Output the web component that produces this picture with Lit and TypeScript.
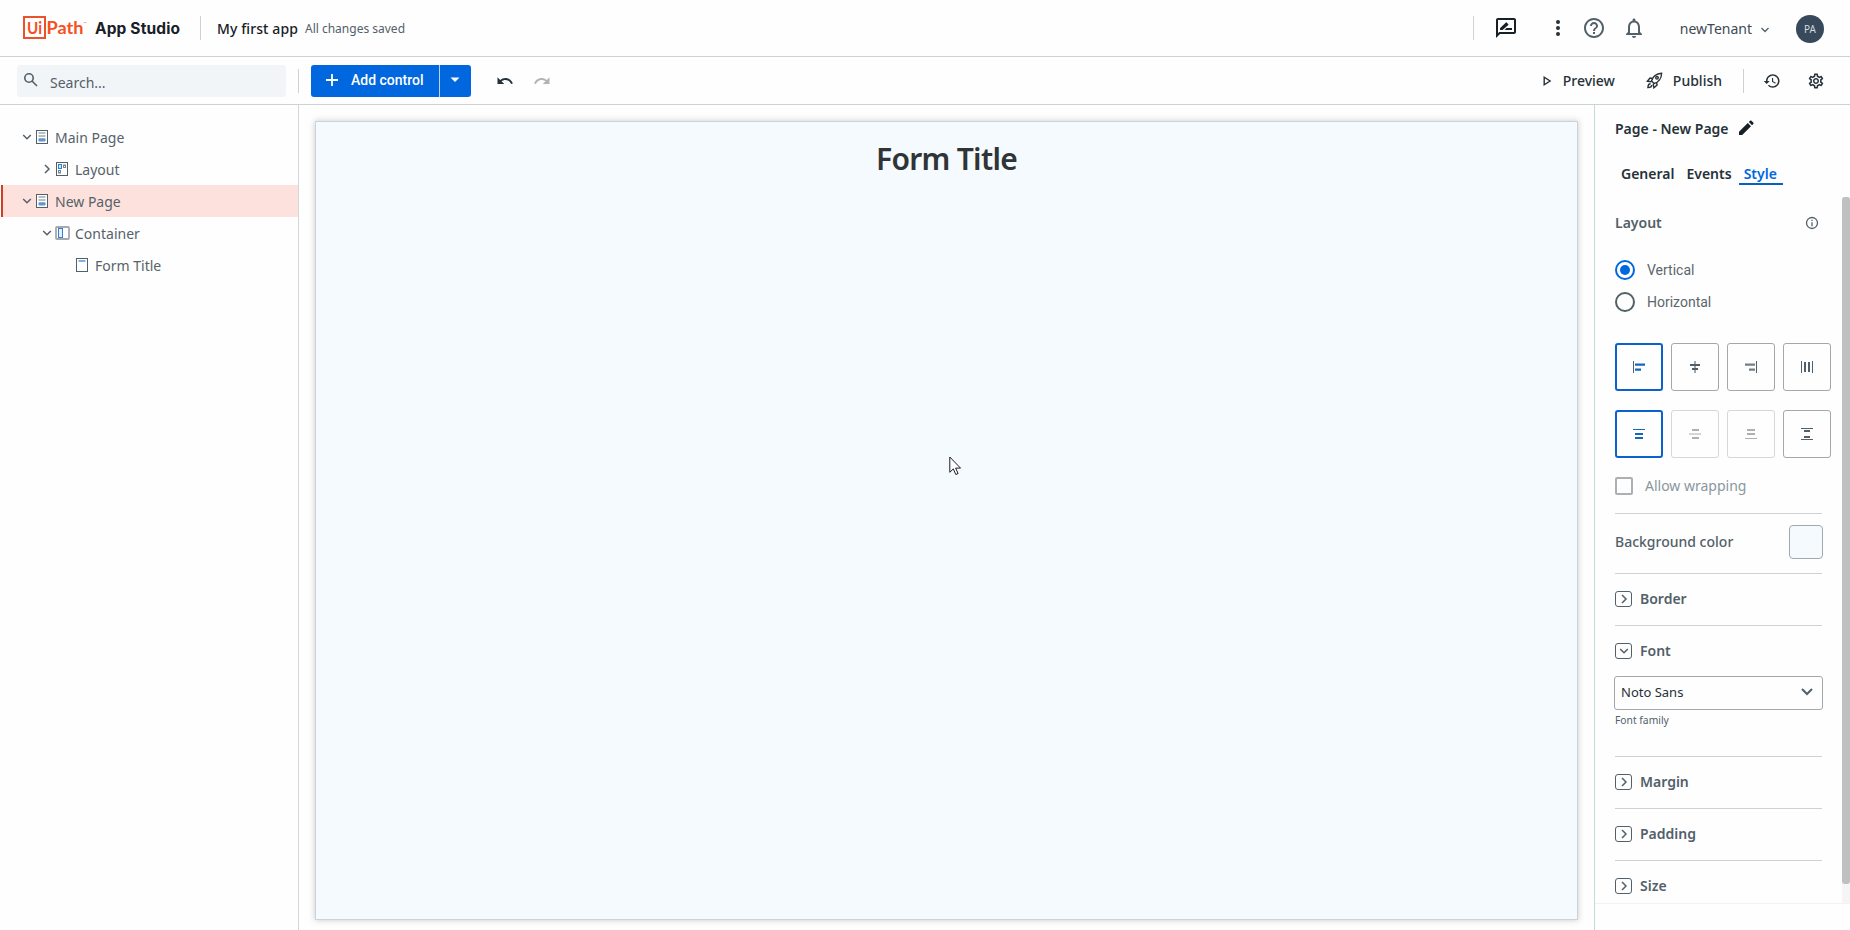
import { html, svg, css, LitElement } from "lit";
import { customElement, property } from "lit/decorators.js";
import { classMap } from "lit/directives/class-map.js";

const chevronRight = html`<svg width="14" height="14" viewBox="0 0 14 14" fill="none" stroke="currentColor" stroke-width="1.5"><path d="M5 3l4 4-4 4" /></svg>`;
const chevronDown = html`<svg width="14" height="14" viewBox="0 0 14 14" fill="none" stroke="currentColor" stroke-width="1.5"><path d="M3.200 5L7 8.800 10.800 5" /></svg>`;

const treeIcons: Record<string, unknown> = {
  page: svg`<rect x="0.500" y="1.500" width="11" height="13" fill="#fff" stroke="#526069" /><path d="M2.500 4h7M2.500 7h7" stroke="#a4a9ad" stroke-width="1.600" /><rect x="2.500" y="9.200" width="7" height="3.200" rx="1" fill="#6394cf" />`,
  layout: svg`<rect x="0.500" y="1.500" width="11" height="13" fill="#fff" stroke="#526069" /><rect x="2.500" y="3.500" width="3" height="4" fill="#cfe4fa" stroke="#2f7fd6" /><rect x="7.500" y="4" width="2" height="2.500" fill="none" stroke="#7a8389" /><rect x="2.500" y="9.500" width="2" height="2.500" fill="none" stroke="#7a8389" />`,
  container: svg`<rect x="0" y="2" width="13" height="12" rx="1" fill="#fff" stroke="#a4a9ad" stroke-width="1.800" /><rect x="2.500" y="3.500" width="4" height="9" fill="#e3effb" stroke="#3a7fcc" />`,
  form: svg`<rect x="0.500" y="1.500" width="11" height="13" fill="#fff" stroke="#526069" /><path d="M2.500 4h7" stroke="#7fb0ea" stroke-width="2" />`,
};

@customElement("tree-row")
export class TreeRow extends LitElement {
  @property({ type: String })
  label = "";
  @property({ type: String })
  icon = "page";
  @property({ type: Number })
  level = 0;
  @property({ type: String })
  state = "";
  @property({ type: Boolean })
  selected = false;
  static styles = css`
    :host {
      display: block;
    }
    .row {
      display: flex;
      align-items: center;
      height: 32px;
      margin-left: 1px;
      padding-left: 17px;
      border-left: 2px solid transparent;
      font-size: 14px;
      color: #56626a;
    }
    .row.selected {
      background: #fde1dc;
      border-left-color: #cf3f20;
    }
    .row.l1 {
      padding-left: 37px;
    }
    .row.l2 {
      padding-left: 57px;
    }
    .toggle {
      display: flex;
      width: 16px;
    }
    .icon {
      overflow: visible;
    }
    .label {
      margin-left: 5px;
    }
  `;
  render() {
    return html`
      <div class=${classMap({ row: true, selected: this.selected, l1: this.level === 1, l2: this.level === 2 })}>
        <span class="toggle">
          ${this.state === "open" ? chevronDown : this.state === "closed" ? chevronRight : ""}
        </span>
        <svg class="icon" width="14" height="16" viewBox="0 0 14 16">${treeIcons[this.icon]}</svg>
        <span class="label">${this.label}</span>
      </div>
    `;
  }
}

@customElement("style-section")
export class StyleSection extends LitElement {
  @property({ type: String })
  label = "";
  @property({ type: Boolean })
  open = false;
  static styles = css`
    :host {
      display: block;
      border-top: 1px solid #cfd2d4;
    }
    .head {
      display: flex;
      align-items: center;
      gap: 8px;
      height: 49px;
      padding-bottom: 2px;
      font-size: 14px;
      font-weight: 600;
      color: #526069;
    }
    .box {
      display: flex;
      align-items: center;
      justify-content: center;
      box-sizing: border-box;
      width: 17px;
      height: 16px;
      border: 1px solid #526069;
      border-radius: 3px;
    }
    .head svg {
      flex: none;
    }
  `;
  render() {
    return html`
      <div class="head">
        <span class="box">${this.open ? chevronDown : chevronRight}</span>
        ${this.label}
      </div>
      <slot></slot>
    `;
  }
}

// glyphs are drawn on a 16px grid; "main" takes the accent colour when active
const alignRow = [
  { state: "active", icon: svg`<path d="M2.500 2v12" stroke="#526069" /><path class="main" d="M4 5.600h10M4 10.600h6" stroke-width="2.400" />` },
  { state: "", icon: svg`<path d="M8 2v12" stroke="#8a9297" stroke-width="1.600" /><path class="main" d="M3 6h10M5 10h6" stroke-width="2" />` },
  { state: "", icon: svg`<path class="main" d="M13.500 2v12" /><path d="M2 5.600h10M6 10.600h6" stroke="#777e83" stroke-width="2.400" />` },
  { state: "", icon: svg`<path class="main" d="M2.500 2v12M13.500 2v12" /><path class="main" d="M6 3v10M10 3v10" stroke-width="2" />` },
];
const justifyRow = [
  { state: "active", icon: svg`<path class="main" d="M2 3.500h12" /><path class="main" d="M4 8h8M4 12h8" stroke-width="2" />` },
  { state: "disabled", icon: svg`<path d="M2 8h12" stroke="#d3d5d6" stroke-width="2" /><path class="main" d="M5 4h7M5 12h7" stroke-width="2" />` },
  { state: "disabled", icon: svg`<path class="main" d="M2 12.500h12" /><path class="main" d="M4 4h8M4 8h8" stroke-width="2" />` },
  { state: "", icon: svg`<path class="main" d="M2 2.500h12M2 13.500h12" /><path class="main" d="M5 5h6M5 11h6" stroke-width="2" />` },
];

@customElement("app-root")
export class AppRoot extends LitElement {
  static styles = css`
    :host {
      display: flex;
      flex-direction: column;
      position: relative;
      height: 930px;
      overflow: hidden;
      background: #fefefe;
      color: #273139;
      font-family: "Noto Sans", sans-serif;
      font-size: 14px;
    }
    svg {
      display: block;
      flex: none;
    }
    .header,
    .toolbar {
      display: flex;
      align-items: center;
      box-sizing: border-box;
      border-bottom: 1px solid #cfd2d4;
      flex: none;
    }
    .header {
      height: 57px;
      padding: 0 26px 0 23px;
    }
    .toolbar {
      height: 48px;
      padding: 0 25px 0 17px;
    }
    .sep {
      width: 1px;
      height: 24px;
      background: #cfd2d4;
      flex: none;
    }
    .header .logo + .sep {
      margin-left: 19px;
    }
    .grow {
      flex: 1;
    }
    .app-name {
      margin-left: 16px;
      font-weight: 500;
      letter-spacing: 0.1px;
      color: #182027;
    }
    .saved {
      margin-left: 7px;
      font-size: 12px;
      color: #526069;
    }
    .feedback {
      margin-left: 20px;
    }
    .more {
      margin-left: 28px;
    }
    .help {
      margin-left: 12px;
    }
    .bell {
      margin-left: 16px;
    }
    .tenant {
      margin: 0 8px 0 34px;
      color: #3d4a54;
    }
    .tenant-arrow {
      margin-top: 4px;
    }
    .avatar {
      display: flex;
      align-items: center;
      justify-content: center;
      width: 28px;
      height: 28px;
      margin: 2px 0 0 26px;
      border-radius: 50%;
      background: #38495b;
      color: #d5dade;
      font-size: 10px;
    }
    .search {
      display: flex;
      align-items: center;
      gap: 12px;
      box-sizing: border-box;
      width: 269px;
      height: 32px;
      padding-left: 6px;
      border-radius: 3px;
      background: #f2f5f7;
      color: #526069;
    }
    .search span {
      padding-top: 4px;
    }
    .search svg {
      margin-top: -3px;
    }
    .search + .sep {
      margin-left: 12px;
    }
    .add {
      display: flex;
      height: 32px;
      margin: 0 25px 0 12px;
      border-radius: 3px;
      background: #0067df;
      color: #fff;
      font: 500 14px Roboto, sans-serif;
    }
    .add-main {
      display: flex;
      align-items: center;
      gap: 12px;
      box-sizing: border-box;
      width: 128px;
      padding: 0 0 1px 14px;
    }
    .add-more {
      display: flex;
      align-items: center;
      justify-content: center;
      box-sizing: border-box;
      width: 32px;
      padding: 0 2px 1px 0;
      border-left: 1px solid #b9d6f7;
    }
    .redo {
      margin-left: 19px;
    }
    .action {
      margin-left: 10px;
      font-weight: 500;
      color: #273139;
    }
    .rocket {
      margin-left: 31px;
    }
    .action + .sep {
      margin-left: 21px;
    }
    .history {
      margin-left: 19px;
    }
    .gear {
      margin-left: 26px;
    }
    .body {
      display: flex;
      flex: 1;
      min-height: 0;
    }
    .tree {
      box-sizing: border-box;
      width: 299px;
      padding-top: 16px;
      border-right: 1px solid #cfd8dd;
    }
    .stage {
      flex: 1;
      padding: 16px 16px 10px;
    }
    .page {
      box-sizing: border-box;
      height: 100%;
      padding-top: 16px;
      border: 1px solid #cdd2d6;
      background: #f5fafe;
      box-shadow: 0 0 6px rgba(40, 40, 60, 0.25);
      text-align: center;
    }
    .page h1 {
      margin: 0;
      font-size: 30px;
      line-height: 41px;
      font-weight: 600;
      letter-spacing: -0.7px;
      color: #2f3437;
    }
    .panel {
      display: flex;
      flex-direction: column;
      box-sizing: border-box;
      width: 256px;
      border-left: 1px solid #c3dbdb;
    }
    .panel-title {
      display: flex;
      align-items: center;
      gap: 9px;
      box-sizing: border-box;
      height: 48px;
      padding: 0 0 2px 20px;
      font-weight: 600;
    }
    .tabs {
      display: flex;
      gap: 2px;
      padding: 6px 0 12px 21px;
      font-weight: 600;
    }
    .tab {
      height: 24px;
      padding: 0 5px;
      border-bottom: 2px solid transparent;
      line-height: 29px;
    }
    .tab.active {
      padding-right: 6px;
      color: #0067df;
      border-color: #0a5fbf;
    }
    .scroller {
      display: flex;
      height: 706px;
      border-bottom: 1px solid #f2f2f3;
    }
    .content {
      flex: 1;
      overflow: hidden;
      padding-left: 20px;
    }
    .track {
      width: 8px;
      background: #f5f5f5;
    }
    .thumb {
      height: 687px;
      border-radius: 3px;
      background: #bfc0c1;
    }
    .fields {
      width: 207px;
    }
    .layout-label {
      display: flex;
      align-items: center;
      justify-content: space-between;
      box-sizing: border-box;
      height: 52px;
      padding: 0 3px 1px 0;
      font-weight: 600;
      color: #526069;
    }
    .radio {
      display: flex;
      align-items: center;
      gap: 12px;
      height: 32px;
      font-family: Roboto, sans-serif;
      color: #5c666d;
    }
    .radio:first-of-type {
      margin-top: 5px;
    }
    .dot {
      box-sizing: border-box;
      width: 20px;
      height: 20px;
      padding: 3px;
      border: 2px solid #526069;
      border-radius: 50%;
    }
    .dot.on {
      border-color: #0067df;
      background: #0067df;
      background-clip: content-box;
    }
    .cells {
      display: flex;
      gap: 8px;
      width: 216px;
    }
    .cells.first {
      margin: 25px 0 19px;
    }
    .cell {
      display: flex;
      align-items: center;
      justify-content: center;
      box-sizing: border-box;
      width: 48px;
      height: 48px;
      border: 1px solid #a4a8ab;
      border-radius: 3px;
    }
    .cell.active {
      border: 2px solid #0b62cd;
    }
    .cell.disabled {
      border-color: #d5d7d8;
    }
    .main {
      stroke: #526069;
    }
    .active .main {
      stroke: #1766bd;
    }
    .disabled .main {
      stroke: #adb0b2;
    }
    .check {
      display: flex;
      align-items: center;
      gap: 12px;
      height: 55px;
      color: #8a979f;
    }
    .check i {
      box-sizing: border-box;
      width: 18px;
      height: 18px;
      border: 2px solid #adb0b2;
      border-radius: 2px;
    }
    .bg-wrap {
      border-top: 1px solid #cfd2d4;
    }
    .bg {
      display: flex;
      align-items: center;
      justify-content: space-between;
      box-sizing: border-box;
      width: 208px;
      height: 59px;
      padding-bottom: 4px;
      font-weight: 500;
      color: #526069;
    }
    .swatch {
      box-sizing: border-box;
      width: 34px;
      height: 34px;
      border: 1px solid #a4a8ab;
      border-radius: 4px;
      background: #f5fafe;
    }
    .select {
      display: flex;
      align-items: center;
      justify-content: space-between;
      box-sizing: border-box;
      width: 209px;
      height: 34px;
      margin: -1px 0 0 -1px;
      padding: 0 9px 2px 6px;
      border: 1px solid #a4a8ab;
      border-radius: 3px;
      font-size: 13px;
    }
    .hint {
      height: 46px;
      padding-top: 2px;
      box-sizing: border-box;
      font-size: 10.300px;
      line-height: 16px;
      color: #526069;
    }
    .cursor {
      position: absolute;
      left: 949px;
      top: 456px;
    }
  `;
  renderCells(cells: typeof alignRow) {
    return cells.map(
      (c) => html`
        <div class="cell ${c.state}">
          <svg width="16" height="16" viewBox="0 0 16 16" fill="none">${c.icon}</svg>
        </div>
      `
    );
  }
  render() {
    return html`
      <div class="header">
        <svg class="logo" width="158" height="26" viewBox="0 0 158 26">
          <rect x="1" y="2" width="21" height="21" fill="none" stroke="#e8532b" stroke-width="2" />
          <g font-family="Lato, sans-serif" fill="#f5501f">
            <text x="4" y="19" font-size="17" font-weight="700" textLength="15" lengthAdjust="spacingAndGlyphs">Ui</text>
            <text x="23.500" y="19" font-size="16.500" font-weight="700" textLength="37" lengthAdjust="spacingAndGlyphs">Path</text>
            <text x="60.500" y="10" font-size="4">™</text>
          </g>
          <text x="72" y="19" font-family="Inter, sans-serif" font-size="15.500" font-weight="700" fill="#182027" textLength="85">App Studio</text>
        </svg>
        <span class="sep"></span>
        <span class="app-name">My first app</span>
        <span class="saved">All changes saved</span>
        <span class="grow"></span>
        <span class="sep"></span>
        <svg class="feedback" width="24" height="24" viewBox="0 0 24 24" fill="#182027">
          <path d="M20 2H4c-1.100 0-2 .9-2 2v18l4-4h14c1.100 0 2-.9 2-2V4c0-1.100-.9-2-2-2zm0 14H5.200L4 17.200V4h16v12z" />
          <path d="M10.500 14H18v-2h-5.500zM14.300 8.900c.2-.2.2-.5 0-.7l-1.700-1.700c-.2-.2-.5-.2-.7 0L6 12.200V14h2.500z" />
        </svg>
        <svg class="more" width="24" height="24" viewBox="0 0 24 24" fill="#273139">
          <circle cx="12" cy="6" r="2" /><circle cx="12" cy="12" r="2" /><circle cx="12" cy="18" r="2" />
        </svg>
        <svg class="help" width="24" height="24" viewBox="0 0 24 24" fill="#526069">
          <path d="M11 18h2v-2h-2v2zm1-16C6.480 2 2 6.480 2 12s4.480 10 10 10 10-4.480 10-10S17.520 2 12 2zm0 18c-4.410 0-8-3.590-8-8s3.590-8 8-8 8 3.590 8 8-3.590 8-8 8zm0-14c-2.210 0-4 1.790-4 4h2c0-1.100.9-2 2-2s2 .9 2 2c0 2-3 1.750-3 5h2c0-2.250 3-2.500 3-5 0-2.210-1.790-4-4-4z" />
        </svg>
        <svg class="bell" width="24" height="24" viewBox="0 0 24 24" fill="#526069">
          <path d="M12 22c1.100 0 2-.9 2-2h-4c0 1.100.9 2 2 2zm6-6v-5c0-3.070-1.630-5.640-4.500-6.320V4c0-.83-.67-1.500-1.500-1.500s-1.500.67-1.500 1.500v.68C7.640 5.360 6 7.920 6 11v5l-2 2v1h16v-1l-2-2zm-2 1H8v-6c0-2.480 1.510-4.500 4-4.500s4 2.020 4 4.500v6z" />
        </svg>
        <span class="tenant">newTenant</span>
        <svg class="tenant-arrow" width="10" height="8" viewBox="0 0 10 8" fill="none" stroke="#526069" stroke-width="1.300"><path d="M1.500 2L5 5.500 8.500 2" /></svg>
        <span class="avatar">PA</span>
      </div>

      <div class="toolbar">
        <div class="search">
          <svg width="15" height="15" viewBox="0 0 15 15" fill="none" stroke="#526069" stroke-width="1.600"><circle cx="6" cy="6" r="4.200" /><path d="M9 9l5 5" /></svg>
          <span>Search...</span>
        </div>
        <span class="sep"></span>
        <div class="add">
          <div class="add-main">
            <svg width="14" height="14" viewBox="0 0 14 14" stroke="#fff" stroke-width="1.800"><path d="M7 1v12M1 7h12" /></svg>
            Add control
          </div>
          <div class="add-more">
            <svg width="10" height="6" viewBox="0 0 10 6" fill="#fff"><path d="M0.500 0.500h9L5 5z" /></svg>
          </div>
        </div>
        <svg width="18" height="18" viewBox="0 0 24 24" fill="#273139"><path d="M12.500 8c-2.650 0-5.050.99-6.900 2.600L2 7v9h9l-3.620-3.620c1.390-1.160 3.160-1.880 5.120-1.880 3.540 0 6.550 2.310 7.600 5.500l2.370-.78C21.080 11.030 17.150 8 12.500 8z" /></svg>
        <svg class="redo" width="18" height="18" viewBox="0 0 24 24" fill="#b1b4b6"><path d="M18.400 10.600C16.550 8.990 14.150 8 11.500 8c-4.650 0-8.580 3.030-9.960 7.220L3.900 16c1.050-3.190 4.050-5.500 7.600-5.500 1.950 0 3.730.72 5.120 1.880L13 16h9V7l-3.600 3.600z" /></svg>
        <span class="grow"></span>
        <svg width="10" height="12" viewBox="0 0 10 12" fill="none" stroke="#273139" stroke-width="1.400"><path d="M1.200 2.200v7.600L7.100 6z" /></svg>
        <span class="action">Preview</span>
        <svg class="rocket" width="17" height="17" viewBox="0 0 17 17" fill="none" stroke="#273139" stroke-width="1.400">
          <path d="M5.500 9C6.600 5 10 1.600 15.600 1.200 15.600 6.800 12 10.400 8 11.500z" />
          <path d="M6.500 6.500L4 6 1.300 9.200l4 .6M10.500 10.500l.6 2.500-3.200 2.800-.7-4M4.600 11.800c-1.500 0-2.600 1.600-2.700 3.800 2.200-.1 3.800-1.200 3.800-2.700" />
          <circle cx="11" cy="5.800" r="1.300" />
        </svg>
        <span class="action">Publish</span>
        <span class="sep"></span>
        <svg class="history" width="18" height="18" viewBox="0 0 24 24" fill="#273139"><path d="M13 3c-4.970 0-9 4.030-9 9H1l3.890 3.890.07.14L9 12H6c0-3.870 3.130-7 7-7s7 3.130 7 7-3.130 7-7 7c-1.930 0-3.680-.79-4.940-2.060l-1.420 1.420C8.270 19.990 10.510 21 13 21c4.970 0 9-4.030 9-9s-4.030-9-9-9zm-1 5v5l4.280 2.540.72-1.210-3.500-2.080V8H12z" /></svg>
        <svg class="gear" width="18" height="18" viewBox="0 0 24 24" fill="#273139"><path d="M19.430 12.980c.04-.32.07-.64.07-.98 0-.34-.03-.66-.07-.98l2.110-1.650c.19-.15.24-.42.12-.64l-2-3.460c-.09-.16-.26-.25-.44-.25-.06 0-.12.01-.17.03l-2.490 1c-.52-.4-1.080-.73-1.690-.98l-.38-2.650C14.460 2.180 14.250 2 14 2h-4c-.25 0-.46.18-.49.42l-.38 2.650c-.61.25-1.170.59-1.690.98l-2.490-1c-.06-.02-.12-.03-.18-.03-.17 0-.34.09-.43.25l-2 3.460c-.13.22-.07.49.12.64l2.110 1.650c-.04.32-.07.65-.07.98 0 .33.03.66.07.98l-2.110 1.650c-.19.15-.24.42-.12.64l2 3.460c.09.16.26.25.44.25.06 0 .12-.01.17-.03l2.490-1c.52.4 1.080.73 1.690.98l.38 2.650c.03.24.24.42.49.42h4c.25 0 .46-.18.49-.42l.38-2.650c.61-.25 1.170-.59 1.690-.98l2.490 1c.06.02.12.03.18.03.17 0 .34-.09.43-.25l2-3.460c.12-.22.07-.49-.12-.64l-2.110-1.650zm-1.980-1.710c.04.31.05.52.05.73 0 .21-.02.43-.05.73l-.14 1.130.89.7 1.080.84-.7 1.210-1.270-.51-1.040-.42-.9.68c-.43.32-.84.56-1.250.73l-1.060.43-.16 1.130-.2 1.350h-1.400l-.19-1.350-.16-1.130-1.060-.43c-.43-.18-.83-.41-1.230-.71l-.91-.7-1.060.43-1.270.51-.7-1.210 1.080-.84.89-.7-.14-1.130c-.03-.31-.05-.54-.05-.74s.02-.43.05-.73l.14-1.130-.89-.7-1.080-.84.7-1.210 1.270.51 1.040.42.9-.68c.43-.32.84-.56 1.250-.73l1.060-.43.16-1.130.2-1.350h1.390l.19 1.350.16 1.130 1.060.43c.43.18.83.41 1.230.71l.91.7 1.060-.43 1.270-.51.7 1.210-1.070.85-.89.7.14 1.130zM12 8c-2.210 0-4 1.790-4 4s1.790 4 4 4 4-1.790 4-4-1.790-4-4-4zm0 6c-1.100 0-2-.9-2-2s.9-2 2-2 2 .9 2 2-.9 2-2 2z" /></svg>
      </div>

      <div class="body">
        <div class="tree">
          <tree-row label="Main Page" state="open"></tree-row>
          <tree-row label="Layout" icon="layout" level="1" state="closed"></tree-row>
          <tree-row label="New Page" state="open" selected></tree-row>
          <tree-row label="Container" icon="container" level="1" state="open"></tree-row>
          <tree-row label="Form Title" icon="form" level="2"></tree-row>
        </div>

        <div class="stage">
          <div class="page"><h1>Form Title</h1></div>
        </div>

        <div class="panel">
          <div class="panel-title">
            Page - New Page
            <svg width="16" height="16" viewBox="0 0 16 16" fill="#182027"><path d="M1 15v-3.200L9.800 3 13 6.200 4.200 15zM10.800 2l1.300-1.300c.4-.4.9-.4 1.300 0l1.900 1.900c.4.4.4.9 0 1.300L14 5.200z" /></svg>
          </div>
          <div class="tabs">
            <span class="tab">General</span>
            <span class="tab">Events</span>
            <span class="tab active">Style</span>
          </div>
          <div class="scroller">
            <div class="content">
              <div class="fields">
                <header class="layout-label">
                  Layout
                  <svg width="14" height="14" viewBox="0 0 14 14" fill="none" stroke="#526069" stroke-width="1.300"><circle cx="7" cy="7" r="5.500" /><path d="M7 6.300v4M7 3.800v1.300" /></svg>
                </header>
                <div class="radio"><span class="dot on"></span>Vertical</div>
                <div class="radio"><span class="dot"></span>Horizontal</div>
                <div class="cells first">${this.renderCells(alignRow)}</div>
                <div class="cells">${this.renderCells(justifyRow)}</div>
                <div class="check"><i></i>Allow wrapping</div>
                <div class="bg-wrap"><div class="bg">Background color<span class="swatch"></span></div></div>
                <style-section label="Border"></style-section>
                <style-section label="Font" open>
                  <div class="select">
                    Noto Sans
                    <svg width="12" height="8" viewBox="0 0 12 8" fill="none" stroke="#526069" stroke-width="2"><path d="M1 1l5 5 5-5" /></svg>
                  </div>
                  <div class="hint">Font family</div>
                </style-section>
                <style-section label="Margin"></style-section>
                <style-section label="Padding"></style-section>
                <style-section label="Size"></style-section>
              </div>
            </div>
            <div class="track"><div class="thumb"></div></div>
          </div>
        </div>
      </div>

      <svg class="cursor" width="13" height="20" viewBox="0 0 13 20" fill="#fff" stroke="#1b1b2a" stroke-width="1"><path d="M0.800 1v15.300l3.500-3.400 2.500 5.600 2.300-1-2.500-5.400h4.900z" /></svg>
    `;
  }
}
